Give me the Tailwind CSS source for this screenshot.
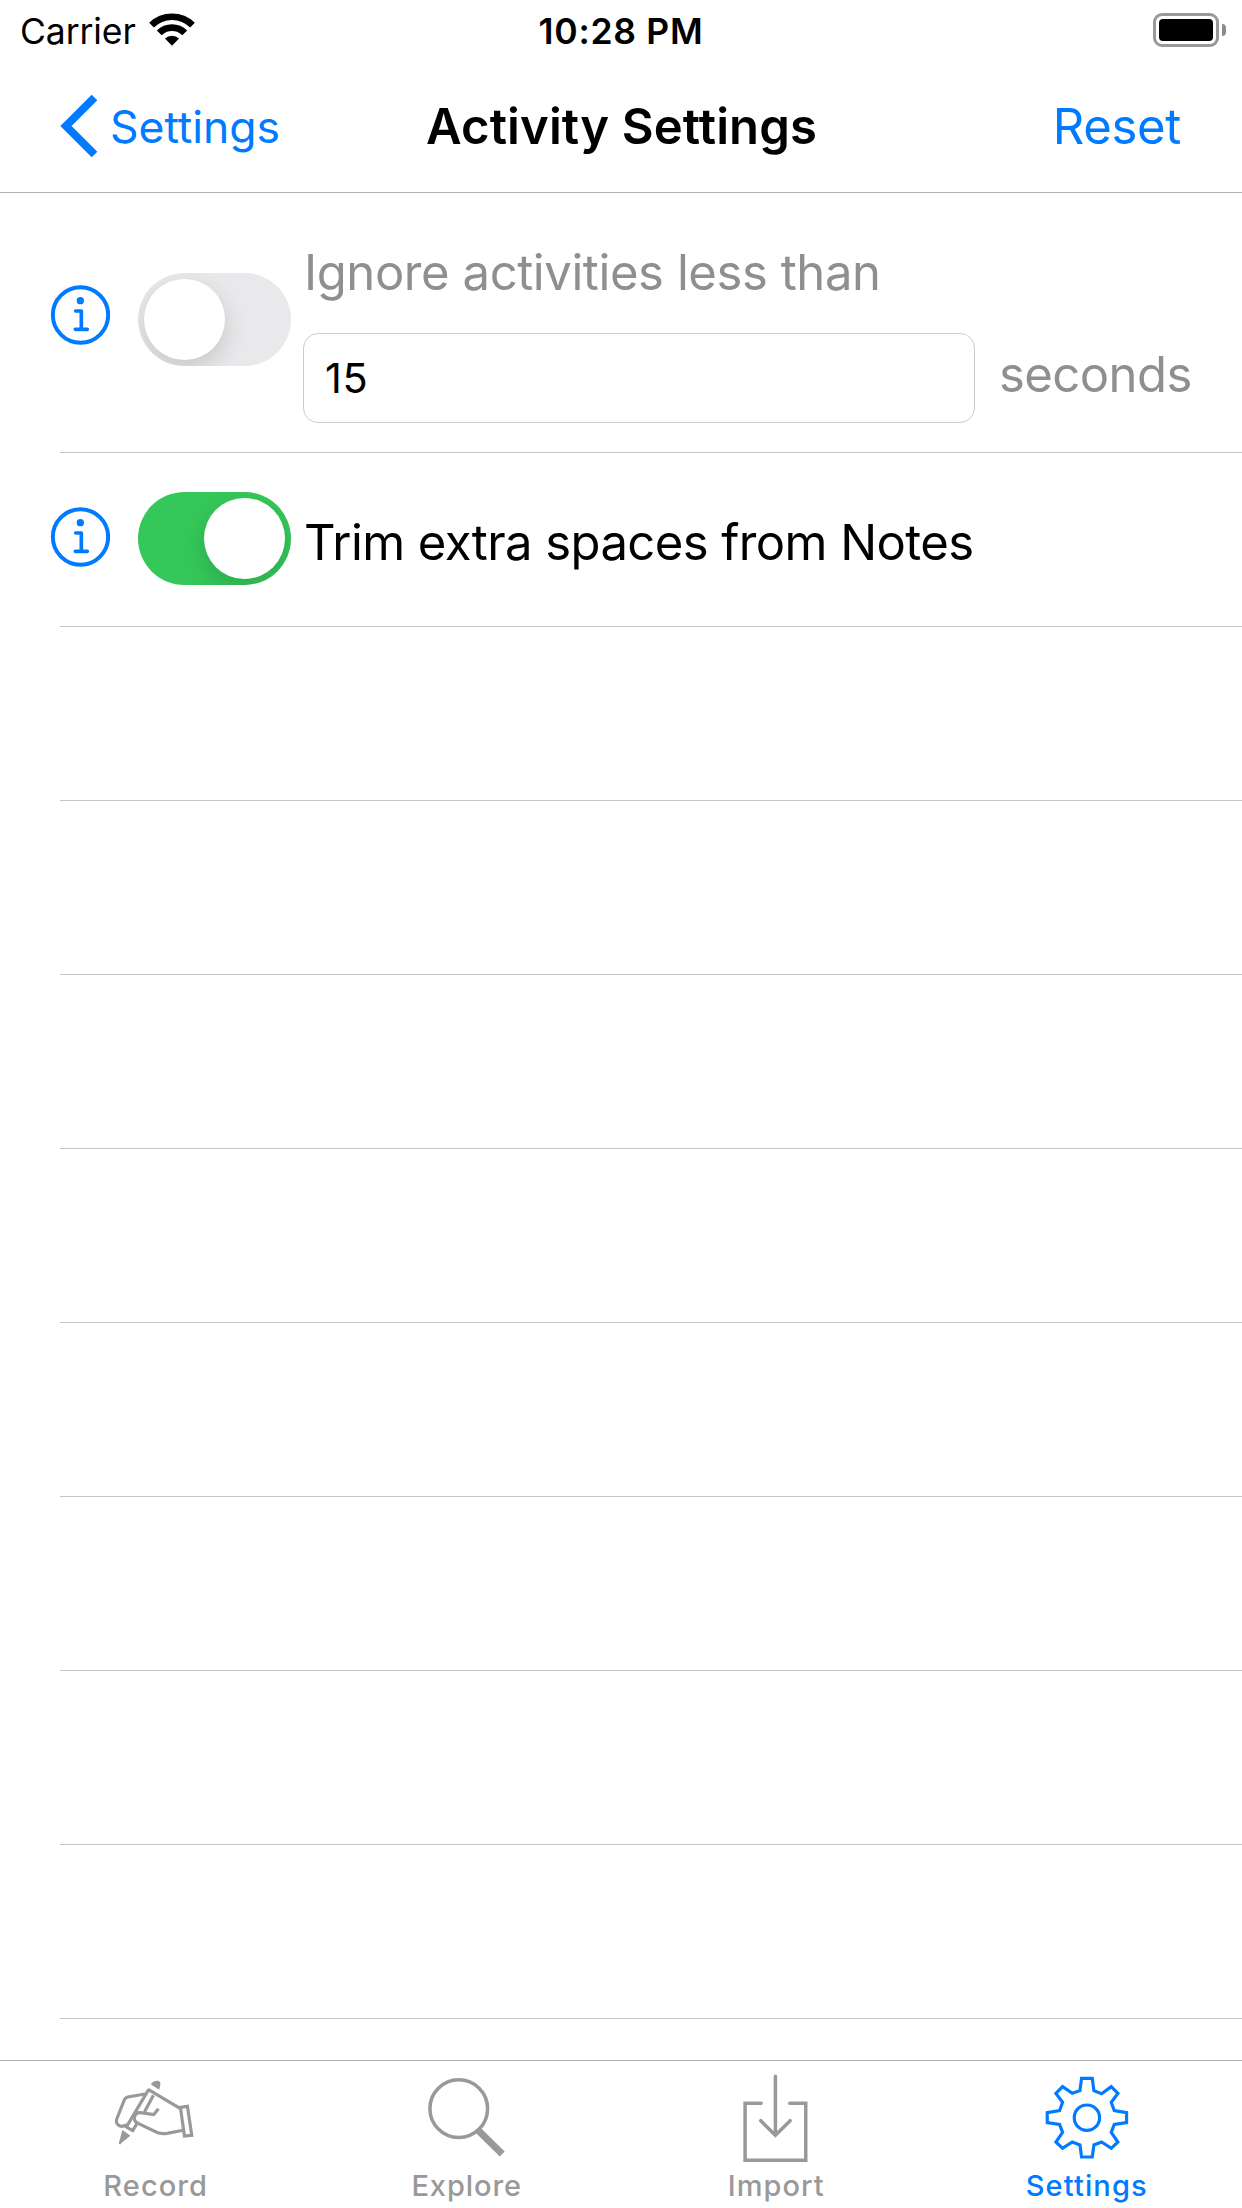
<!DOCTYPE html>
<html lang="en">
<head>
<meta charset="utf-8">
<title>Activity Settings</title>
<script src="https://cdn.jsdelivr.net/npm/@tailwindcss/browser@4"></script>
</head>
<body class="flex h-[2208px] w-[1242px] flex-col overflow-hidden bg-white font-['Inter',sans-serif] text-black">

<!-- Status bar -->
<div class="grid h-[60px] shrink-0 grid-cols-3 text-[35.5px] leading-[64px] whitespace-nowrap">
  <div class="flex pl-[20px]">
    <span class="tracking-[-0.1px]">Carrier</span>
    <svg class="mt-[12px] ml-[12px] h-[35px] w-[48px]" viewBox="444 36 144 105">
      <path d="M447.500 68.500A97 97 0 0 1 584.500 68.500L570.500 82.500A77 77 0 0 0 461.500 82.500Z"/>
      <path d="M470.500 91.500A64.500 64.500 0 0 1 561.500 91.500L547 106A43.500 43.500 0 0 0 485 106Z"/>
      <path d="M494.800 115.800A30 30 0 0 1 537.200 115.800L516 137Z"/>
    </svg>
  </div>
  <div class="text-center font-semibold tracking-[0.71px]">10:28 PM</div>
  <div class="flex justify-end pt-[13px] pr-[16px]">
    <div class="h-[34px] w-[66px] rounded-[9px] border-3 border-[#999] p-[3px]">
      <div class="h-[22px] w-[54px] rounded-[4px] bg-black"></div>
    </div>
    <div class="mt-[11px] ml-[3px] h-[12px] w-[4px] rounded-r-full bg-[#8c8c8c]"></div>
  </div>
</div>

<!-- Navigation bar -->
<header class="grid h-[133px] shrink-0 grid-cols-[1fr_auto_1fr] items-center border-b border-[#b0b0b0] text-[49px] leading-[60px] whitespace-nowrap">
  <div class="flex items-center pl-[60px] text-[#007aff]">
    <svg class="h-[64px] w-[38px]" viewBox="0 0 38 64" fill="none" stroke="currentColor" stroke-width="8"><path d="M34.500 3.500L6 32L34.500 60.500"/></svg>
    <span class="mt-[2px] ml-[12px] text-[44.5px] tracking-[-0.06px]">Settings</span>
  </div>
  <h1 class="pt-[2px] pl-[1px] font-semibold tracking-[0.12px]">Activity Settings</h1>
  <div class="pt-[2px] pr-[61px] text-right tracking-[-0.3px] text-[#007aff]">Reset</div>
</header>

<!-- Settings list -->
<main class="flex flex-1 flex-col overflow-hidden text-[49px] leading-[60px]">
  <div class="flex h-[259px] shrink-0 pl-[50px]">
    <svg class="mt-[92px] size-[60px] shrink-0 text-[#007aff]" viewBox="60 165 180 180" fill="none" stroke="currentColor">
      <circle cx="151.500" cy="255" r="83" stroke-width="12"/>
      <circle cx="151" cy="212" r="11" fill="currentColor" stroke="none"/>
      <path d="M137 243H154V298M136 298H172" stroke-width="11" stroke-linecap="round" stroke-linejoin="round"/>
    </svg>
    <div class="mt-[80px] ml-[28px] h-[93px] w-[153px] shrink-0 overflow-hidden rounded-full bg-[#e9e9eb] p-[6px]">
      <div class="size-[81px] rounded-full bg-white shadow-[0_9px_24px_rgba(0,0,0,0.15)]"></div>
    </div>
    <div class="ml-[12px] pt-[50px]">
      <div class="pl-[1px] tracking-[-0.42px] whitespace-nowrap text-[#8f8f8f]">Ignore activities less than</div>
      <div class="mt-[30px] flex">
        <div class="h-[90px] w-[672px] rounded-[15px] border border-[#cdcdcd] pl-[21px] text-[41.5px] leading-[88px] tracking-[0.5px]">15</div>
        <div class="mt-[12px] ml-[24px] tracking-[-0.55px] text-[#8f8f8f]">seconds</div>
      </div>
    </div>
  </div>
  <hr class="ml-[60px] shrink-0 border-[#c4c4c6]">
  <div class="flex h-[173px] shrink-0 pl-[50px]">
    <svg class="mt-[54px] size-[60px] shrink-0 text-[#007aff]" viewBox="60 165 180 180" fill="none" stroke="currentColor">
      <circle cx="151.500" cy="255" r="83" stroke-width="12"/>
      <circle cx="151" cy="212" r="11" fill="currentColor" stroke="none"/>
      <path d="M137 243H154V298M136 298H172" stroke-width="11" stroke-linecap="round" stroke-linejoin="round"/>
    </svg>
    <div class="mt-[39px] ml-[28px] flex h-[93px] w-[153px] shrink-0 justify-end overflow-hidden rounded-full bg-[#35c759] p-[6px]">
      <div class="size-[81px] rounded-full bg-white shadow-[0_9px_24px_rgba(0,0,0,0.15)]"></div>
    </div>
    <div class="mt-[60px] ml-[13px] tracking-[-0.58px] whitespace-nowrap">Trim extra spaces from Notes</div>
  </div>
  <hr class="ml-[60px] shrink-0 border-[#c4c4c6]">
  <div class="ml-[60px] h-[174px] shrink-0 border-b border-[#c4c4c6]"></div>
  <div class="ml-[60px] h-[174px] shrink-0 border-b border-[#c4c4c6]"></div>
  <div class="ml-[60px] h-[174px] shrink-0 border-b border-[#c4c4c6]"></div>
  <div class="ml-[60px] h-[174px] shrink-0 border-b border-[#c4c4c6]"></div>
  <div class="ml-[60px] h-[174px] shrink-0 border-b border-[#c4c4c6]"></div>
  <div class="ml-[60px] h-[174px] shrink-0 border-b border-[#c4c4c6]"></div>
  <div class="ml-[60px] h-[174px] shrink-0 border-b border-[#c4c4c6]"></div>
  <div class="ml-[60px] h-[174px] shrink-0 border-b border-[#c4c4c6]"></div>
</main>

<!-- Tab bar -->
<nav class="grid h-[148px] shrink-0 grid-cols-4 border-t border-[#b0b0b0] pt-[5px] text-[29px] leading-[41px] font-medium text-[#999]">
  <div class="flex flex-col items-center gap-[9px]">
    <svg class="size-[90px] overflow-visible" viewBox="90.750 48 270 270" fill="none" stroke="currentColor" stroke-width="9.500">
      <path d="M213 103C222 90 238 90 241 97C243 104 241 112 238 119Z" fill="currentColor" stroke="none"/>
      <path d="M128 240L152 257L124 280L121 284L117 280Z" fill="currentColor" stroke="none"/>
      <path d="M207 118L140 231L159 242L175 215M221 136L194 186"/>
      <path d="M196 132L144 141Q137 143 134 149L111 207C107 219 116 230 127 229Q136 227 143 224"/>
      <path d="M205 118L302 176M314 240L262 250Q248 252 234 248L172 219C158 209 163 186 182 188L222 194L236 176"/>
      <path d="M302 172L323 169L336 256L314 258Z"/>
    </svg>
    <span class="pl-[1px] tracking-[1.08px]">Record</span>
  </div>
  <div class="flex flex-col items-center gap-[9px]">
    <svg class="size-[90px] overflow-visible" viewBox="92.250 48 270 270" fill="none" stroke="currentColor">
      <circle cx="205.500" cy="176" r="86.500" stroke-width="10.500"/>
      <path d="M265 242L336 312" stroke-width="21"/>
    </svg>
    <span class="pl-[2px] tracking-[0.93px]">Explore</span>
  </div>
  <div class="flex flex-col items-center gap-[9px]">
    <svg class="size-[90px] overflow-visible" viewBox="93.750 48 270 270" fill="none" stroke="currentColor" stroke-width="10.500" stroke-linecap="round">
      <path d="M184 160H136V331H318V160H270M227 79V256M183 212L227 256L271 212"/>
    </svg>
    <span class="tracking-[1.04px]">Import</span>
  </div>
  <div class="flex flex-col items-center gap-[9px] text-[#007aff]">
    <svg class="size-[90px] overflow-visible" viewBox="125.250 48 270 270" fill="none" stroke="currentColor" stroke-width="9.500">
      <path d="M244 85H276L281 122L304 131L333 110L353 130L333 157L342 182L379 188V218L342 223L333 247L353 276L333 295L304 276L281 285L276 321H244L239 285L216 276L187 295L167 276L187 247L178 223L141 218V188L178 182L187 157L167 130L187 110L216 130L239 122Z"/>
      <circle cx="260" cy="203" r="38"/>
    </svg>
    <span class="tracking-[1.13px]">Settings</span>
  </div>
</nav>
</body>
</html>
